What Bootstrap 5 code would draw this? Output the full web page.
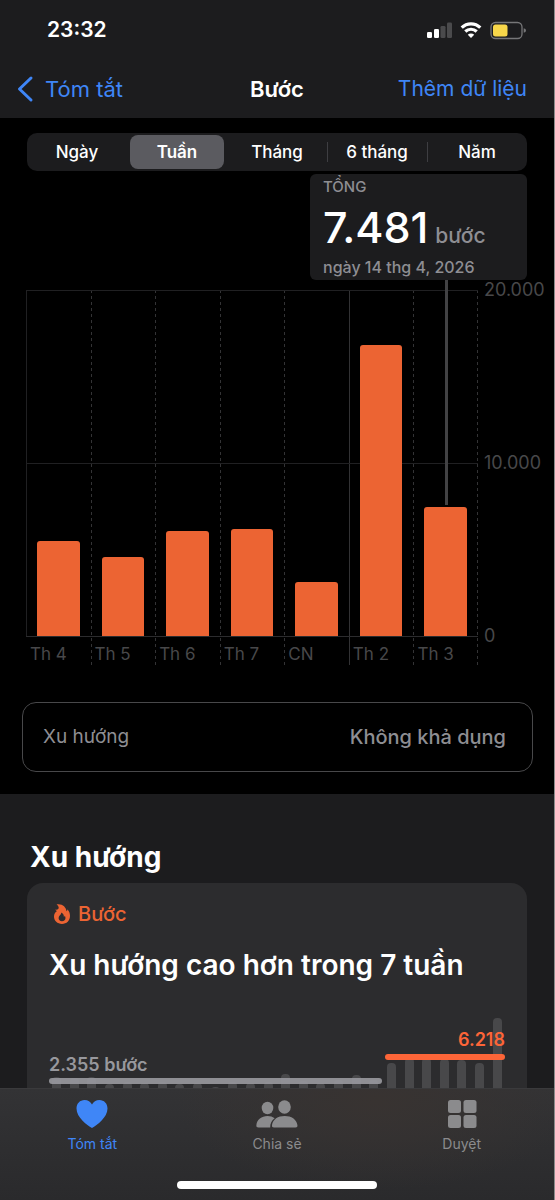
<!DOCTYPE html>
<html lang="vi" data-bs-theme="dark">
<head>
<meta charset="utf-8">
<meta name="viewport" content="width=device-width, initial-scale=1">
<title>Bước</title>
<link rel="stylesheet" href="https://cdn.jsdelivr.net/npm/bootstrap@5.3.0/dist/css/bootstrap.min.css">
<style>
  :root { --panel: #1c1c1e; --raised: #2c2c2e; --muted: #8e8e93; --dim: #48484a; --accent: #3f86f7; --steps: #ec6433; }
  body { font-family: Inter, "Liberation Sans", sans-serif; background: var(--panel); color: #fff; border-right: 1px solid #8a8a8a; line-height: 1.2; }
  a { color: var(--accent); text-decoration: none; }
  svg { display: block; }

  .status { height: 60px; padding: 0 28px 0 47px; font-size: 21px; }
  .topbar { height: 58px; padding: 0 27px; font-size: 22px; display: grid; grid-template-columns: 1fr auto 1fr; }
  .topbar h1 { font-size: 22px; }
  .topbar .back { margin-left: -10px; }
  .topbar .add { font-size: 21px; }
  .scroller { min-height: 0; scrollbar-width: none; }
  .scroller::-webkit-scrollbar { display: none; }

  .chart-zone { background: #000; padding-top: 15px; padding-bottom: 22px; }
  .segments { margin: 0 27px; height: 38px; background: var(--panel); border-radius: 10px; font-size: 17px; display: grid; grid-template-columns: repeat(5, 1fr); }
  .segments label { margin: 2px 3px; border-radius: 8px; display: flex; align-items: center; justify-content: center; font-weight: 500; cursor: pointer; }
  .segments .btn-check:checked + label { background: #5b5b60; font-weight: 600; }
  .segments label.ruled { position: relative; }
  .segments label.ruled::before { content: ""; position: absolute; left: -3px; top: 7px; bottom: 7px; width: 1px; background: #3e3e42; }

  .chart-wrap { position: relative; padding: 119px 0 0 26px; }
  .callout { position: absolute; top: 3px; right: 27px; width: 217px; height: 106px; border-radius: 6px; background: var(--panel); color: var(--muted); padding: 4px 13px; z-index: 2; }
  .callout .cap { font-size: 15px; line-height: 18px; font-weight: 500; }
  .callout .total { height: 62px; line-height: 62px; font-size: 43px; font-weight: 500; color: #fff; gap: 7px; }
  .callout .unit { font-size: 21px; font-weight: 500; color: var(--muted); }
  .callout .date { font-size: 16px; line-height: 18px; font-weight: 500; }

  .plot { display: grid; grid-template-columns: repeat(7, 1fr); flex: 1; }
  .day { background: repeating-linear-gradient(#333335 0 3px, transparent 3px 6px) left / 1px 100% no-repeat; }
  .day.first { background: linear-gradient(#202022, #202022) left top / 1px 346px no-repeat; }
  .day.week { background: linear-gradient(#323234, #323234) left / 1px 100% no-repeat; }
  .day.last { background: repeating-linear-gradient(#333335 0 3px, transparent 3px 6px) left / 1px 100% no-repeat, repeating-linear-gradient(#333335 0 3px, transparent 3px 6px) right / 1px 100% no-repeat; }
  .field { position: relative; height: 347px; border-top: 1px solid #202022; border-bottom: 1px solid #2c2c2e; background: linear-gradient(#202022, #202022) 0 50% / 100% 1px no-repeat; display: flex; align-items: flex-end; justify-content: center; }
  .stem { width: 66%; background: var(--steps); border-radius: 3px 3px 0 0; }
  .pointer { position: absolute; top: -11px; left: 50%; width: 3px; margin-left: -1px; bottom: calc(37.4% + 2px); background: #424244; }
  .day-name { height: 28px; line-height: 35px; padding-left: 4px; font-size: 17px; color: var(--dim); }
  .scale { width: 76px; height: 368px; margin-top: -11px; padding-left: 6px; font-size: 18px; line-height: 22px; color: var(--dim); }

  .trend-row { margin: 37px 21px 0 22px; height: 70px; border: 1px solid var(--dim); border-radius: 14px; padding: 0 26px 0 20px; color: var(--muted); font-size: 19px; }
  .trend-row .value { font-size: 20px; font-weight: 500; }
  .trends { padding: 46px 27px 0; }
  .trends h2 { font-size: 28px; line-height: 34px; margin: 0 0 9px 3px; font-weight: 700; }
  .trend-card { background: var(--raised); border-radius: 16px; padding: 19px 22px; }
  .trend-card .kind { color: var(--steps); font-size: 20px; line-height: 24px; font-weight: 500; padding-left: 4px; gap: 7px; }
  .trend-card h3 { font-size: 28px; line-height: 34px; margin: 22px 0 34px; font-weight: 600; white-space: nowrap; }

  .mini { position: relative; height: 120px; }
  .weeks { height: 100%; display: flex; align-items: flex-end; justify-content: space-between; padding: 0 3px; }
  .weeks span { width: 9px; border-radius: 4px 4px 0 0; background: #48484a; }
  .avg { position: absolute; border-radius: 3px; }
  .avg.before { left: 0; width: 73%; top: 62px; height: 6px; background: rgba(152,152,157,.92); }
  .avg.now { right: 0; width: 26.4%; top: 38px; height: 6px; background: #fd6538; }
  .avg-label { position: absolute; font-size: 18px; line-height: 20px; font-weight: 600; }
  .avg-label.before { left: 0; top: 39px; color: #98989d; }
  .avg-label.now { right: 0; top: 14px; color: #fd6538; }

  .tabs { height: 112px; background: radial-gradient(ellipse 200px 90px at 68% 10%, #383331, transparent), linear-gradient(#333335, #2a2a2c); border-top: 1px solid #3a3a3c; padding-top: 10px; }
  .tabs a { flex: 1; color: #8b8b8d; font-size: 14px; line-height: 16px; font-weight: 400; display: flex; flex-direction: column; align-items: center; gap: 7px; }
  .tabs a.active { color: var(--accent); }
  .home { width: 36%; height: 8px; border-radius: 4px; background: #fff; margin: 29px auto 0; }
</style>
<script src="https://cdn.jsdelivr.net/npm/bootstrap@5.3.0/dist/js/bootstrap.bundle.min.js"></script>
</head>
<body class="d-flex flex-column vh-100 overflow-hidden">
  <header>
    <div class="status d-flex align-items-center justify-content-between fw-semibold">
      <span>23:32</span>
      <svg width="100" height="20" viewBox="0 0 100 20" aria-hidden="true">
        <g fill="#fff"><rect x="1" y="12" width="5" height="6" rx="1.3"/><rect x="8" y="9" width="5" height="9" rx="1.3"/></g>
        <g fill="#4a4a4c"><rect x="14.500" y="6" width="5" height="12" rx="1.300"/><rect x="21" y="2.500" width="5" height="15.500" rx="1.300"/></g>
        <g fill="none" stroke="#fff" stroke-width="3.200"><path d="M35.700 7.600a13.300 13.300 0 0 1 18.600 0"/><path d="M39.300 11.500a8.300 8.300 0 0 1 11.400 0"/></g>
        <path fill="#fff" d="M45 18l-3.200-3.300a4.600 4.600 0 0 1 6.400 0z"/>
        <rect x="65" y="2.500" width="31" height="16" rx="4.500" fill="none" stroke="#767678" stroke-width="1.300"/>
        <rect x="67" y="4.500" width="14.500" height="12" rx="2.500" fill="#f8d74a"/>
        <path fill="#767678" d="M97.700 8.200q2.300.6 2.300 2.300t-2.300 2.300z"/>
      </svg>
    </div>
    <nav class="topbar align-items-center">
      <a href="#" class="back d-flex align-items-center">
        <svg width="28" height="28" viewBox="0 0 28 28" fill="none" stroke="currentColor" stroke-width="3" stroke-linecap="round" stroke-linejoin="round" aria-hidden="true"><path d="M14 3L2.500 14L14 25"/></svg>
        Tóm tắt</a>
      <h1 class="m-0 fw-semibold">Bước</h1>
      <a href="#" class="add text-end">Thêm dữ liệu</a>
    </nav>
  </header>

  <main class="scroller flex-grow-1 overflow-auto">
    <section class="chart-zone">
      <div class="segments" role="group" aria-label="Khoảng thời gian">
        <input class="btn-check" type="radio" name="range" id="r1"><label for="r1">Ngày</label>
        <input class="btn-check" type="radio" name="range" id="r2" checked><label for="r2">Tuần</label>
        <input class="btn-check" type="radio" name="range" id="r3"><label for="r3">Tháng</label>
        <input class="btn-check" type="radio" name="range" id="r4"><label for="r4" class="ruled">6 tháng</label>
        <input class="btn-check" type="radio" name="range" id="r5"><label for="r5" class="ruled">Năm</label>
      </div>

      <div class="chart-wrap">
        <div class="callout">
          <div class="cap">TỔNG</div>
          <div class="total d-flex align-items-baseline"><span>7.481</span><span class="unit">bước</span></div>
          <div class="date">ngày 14 thg 4, 2026</div>
        </div>
        <div class="d-flex">
          <div class="plot">
            <div class="day first"><div class="field"><div class="stem" style="height:27.6%"></div></div><div class="day-name">Th 4</div></div>
            <div class="day"><div class="field"><div class="stem" style="height:23%"></div></div><div class="day-name">Th 5</div></div>
            <div class="day"><div class="field"><div class="stem" style="height:30.4%"></div></div><div class="day-name">Th 6</div></div>
            <div class="day"><div class="field"><div class="stem" style="height:30.9%"></div></div><div class="day-name">Th 7</div></div>
            <div class="day"><div class="field"><div class="stem" style="height:15.8%"></div></div><div class="day-name">CN</div></div>
            <div class="day week"><div class="field"><div class="stem" style="height:84.3%"></div></div><div class="day-name">Th 2</div></div>
            <div class="day last"><div class="field"><div class="stem" style="height:37.4%"></div><div class="pointer"></div></div><div class="day-name">Th 3</div></div>
          </div>
          <div class="scale d-flex flex-column justify-content-between"><span>20.000</span><span>10.000</span><span>0</span></div>
        </div>
      </div>

      <div class="trend-row d-flex align-items-center justify-content-between">
        <span>Xu hướng</span><span class="value">Không khả dụng</span>
      </div>
    </section>

    <section class="trends">
      <h2>Xu hướng</h2>
      <article class="trend-card">
        <div class="kind d-flex align-items-center">
          <svg width="18" height="20" viewBox="0 0 18 20" aria-hidden="true"><path fill="currentColor" fill-rule="evenodd" d="M3.600.3C9.500-.6 13 3 13.600 7.200q.9-.6.700-2C16.200 7 17 9.300 17 11.800 17 16.700 13.600 20 9 20S1 16.900 1 12.600C1 10 2.200 8.300 4 7Q2.800 6.800 2.300 5.500Q4.200 6 5.400 4.700Q6.500 2.600 3.600.3zM9 17.200c2.100 0 3.500-1.300 3.500-3.200 0-1-.3-1.700-.8-2.300q-.1.900-.8 1.200c.1-2-1-3.500-2.700-4.300.4 2.200-2.600 2.900-2.600 5.500 0 1.900 1.300 3.100 3.400 3.100z"/></svg>
          Bước
        </div>
        <h3>Xu hướng cao hơn trong 7 tuần</h3>
        <div class="mini">
          <div class="weeks">
            <span style="height:49%"></span><span style="height:48%"></span><span style="height:49%"></span><span style="height:43%"></span><span style="height:45%"></span><span style="height:44%"></span><span style="height:45%"></span><span style="height:43%"></span><span style="height:44%"></span><span style="height:41%"></span><span style="height:45%"></span><span style="height:44%"></span><span style="height:45%"></span><span style="height:52%"></span><span style="height:46%"></span><span style="height:44%"></span><span style="height:47%"></span><span style="height:51%"></span><span style="height:47%"></span><span style="height:61%"></span><span style="height:65%"></span><span style="height:65%"></span><span style="height:64%"></span><span style="height:63%"></span><span style="height:61%"></span><span style="height:98%"></span>
          </div>
          <div class="avg before"></div><div class="avg now"></div>
          <div class="avg-label before">2.355 bước</div>
          <div class="avg-label now">6.218</div>
        </div>
      </article>
    </section>
  </main>

  <footer class="tabs flex-shrink-0">
    <nav class="d-flex">
      <a href="#" class="active"><svg width="32" height="30" viewBox="0 0 32 30" fill="currentColor" aria-hidden="true"><path d="M16 29C11 26 .5 18.500.5 9.500.5 4.500 4 1 8.500 1 12 1 14.700 2.800 16 5.500 17.300 2.800 20 1 23.500 1 28 1 31.500 4.500 31.500 9.500 31.500 18.500 21 26 16 29z"/></svg>Tóm tắt</a>
      <a href="#"><svg width="42" height="30" viewBox="0 0 42 30" fill="currentColor" aria-hidden="true"><ellipse cx="11.500" cy="9" rx="5.800" ry="6.200"/><path d="M2.500 28.500Q0 28.500.4 26C1 20.500 5.500 17 11.500 17q4.300 0 7.200 2.200c-3 2.300-4.700 5.300-4.500 9.300z"/><ellipse cx="28.500" cy="8" rx="6.300" ry="6.800"/><path d="M18 28.500q-2.400 0-2-2.500C16.800 20.300 22 17 28.700 17s11.900 3.300 12.700 9q.4 2.500-2 2.500z"/></svg>Chia sẻ</a>
      <a href="#"><svg width="30" height="30" viewBox="0 0 30 30" fill="currentColor" aria-hidden="true"><rect x="1" y="1" width="13" height="13" rx="2.500"/><rect x="16.500" y="1" width="13" height="13" rx="2.500"/><rect x="1" y="16" width="13" height="13" rx="2.500"/><rect x="16.500" y="16" width="13" height="13" rx="2.500"/></svg>Duyệt</a>
    </nav>
    <div class="home"></div>
  </footer>
</body>
</html>
